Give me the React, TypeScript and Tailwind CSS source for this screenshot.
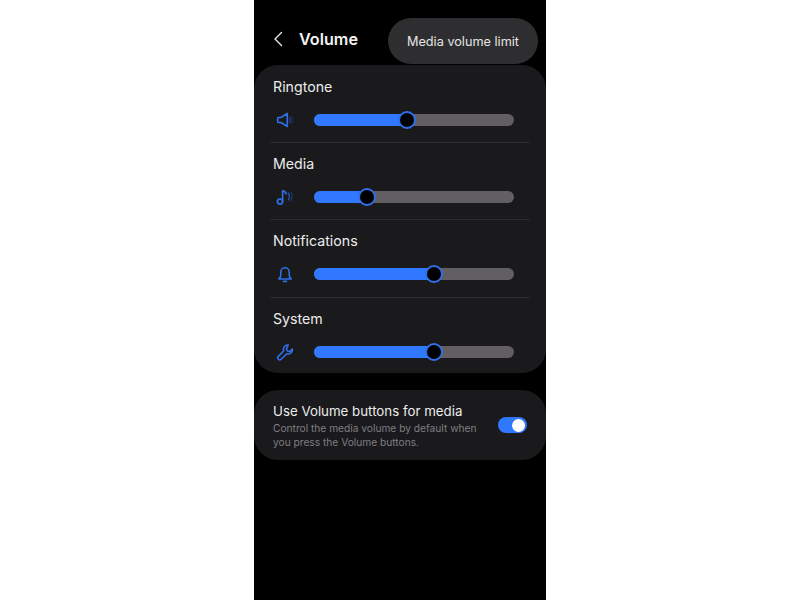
const sans = "font-['Inter','Noto_Sans',sans-serif]";

function SpeakerIcon() {
  return (
    <svg width="18" height="18" viewBox="0 0 18 18" fill="none" stroke="#2f6fe8" strokeWidth="1.6" strokeLinejoin="round" strokeLinecap="round">
      <path d="M1.7 6.5v5h3.2l6.4 4V2.5L4.9 6.5z" />
      <path d="M13.6 6.5c.8 1.6.8 3.4 0 5" stroke="#1f3f80" />
      <path d="M15.8 5.5c1 2.2 1 4.8 0 7" stroke="#1b2c52" />
    </svg>
  );
}

function MusicIcon() {
  return (
    <svg width="18" height="18" viewBox="0 0 18 18" fill="none" stroke="#2f6fe8" strokeWidth="1.7" strokeLinecap="round" strokeLinejoin="round">
      <circle cx="4" cy="13.6" r="2.6" />
      <path d="M6.6 13.4V2.8c1.8.2 3 1.2 3.6 3" />
      <path d="M12.4 5c1.1 2.2 1.1 5 0 7" stroke="#2a559f" strokeWidth="1.4" />
      <path d="M15 4c1.4 2.8 1.4 6.2 0 9" stroke="#1d3766" strokeWidth="1.4" />
    </svg>
  );
}

function BellIcon() {
  return (
    <svg width="18" height="18" viewBox="0 0 18 18" fill="none" stroke="#2f6fe8" strokeWidth="1.6" strokeLinecap="round" strokeLinejoin="round">
      <path d="M2.8 14c1.3-1 2-2.1 2-4V7a4.2 4.2 0 0 1 8.4 0v3c0 1.9.7 3 2 4z" />
      <path d="M7.5 16.4h3" />
    </svg>
  );
}

function WrenchIcon() {
  return (
    <svg width="18" height="18" viewBox="0 0 18 18" fill="none" stroke="#2f6fe8" strokeWidth="1.6" strokeLinecap="round" strokeLinejoin="round">
      <path d="M12.2 2a4.2 4.2 0 0 0-4.4 5.8l-5.5 5.6a2 2 0 0 0 2.9 2.9l5.6-5.6a4.2 4.2 0 0 0 5.6-4.6l-2.6 2.5-2.6-.7-.7-2.6z" />
    </svg>
  );
}

function VolumeRow({
  label,
  percent,
  icon,
  height,
  divider,
}: {
  label: string;
  percent: number;
  icon: React.ReactNode;
  height: string;
  divider?: boolean;
}) {
  return (
    <div className={`${height} mx-4 ${divider ? "border-b border-[#2c2b2f]" : ""}`}>
      <div className="h-[43px] pt-[10px] pl-[3px] text-[14.2px] leading-[22px] text-[#ececec]">{label}</div>
      <div className="flex items-center h-[22px]">
        <div className="w-11 shrink-0 pl-[6px]">{icon}</div>
        <div className="relative w-[200px] h-3 rounded-full bg-[#625f63]">
          <div className="h-3 rounded-full bg-[#2f78ff]" style={{ width: `${percent}%` }} />
          <div
            className="absolute top-[-3px] ml-[-9px] w-[18px] h-[18px] rounded-full bg-black border-2 border-[#2f6fe8]"
            style={{ left: `${percent}%` }}
          />
        </div>
      </div>
    </div>
  );
}

export default function App() {
  return (
    <div className={`min-h-[600px] bg-white ${sans}`}>
      <div className="relative w-[292px] h-[600px] mx-auto bg-black overflow-hidden">
        <header className="flex items-center h-[65px] pl-[18px] pt-[13px]">
          <svg width="12" height="18" viewBox="0 0 12 18" fill="none" stroke="#e8e8e8" strokeWidth="1.4" strokeLinecap="round" strokeLinejoin="round">
            <path d="M9.5 2.5 3 9l6.5 6.5" />
          </svg>
          <h1 className="ml-[15px] mt-[1px] text-[16.2px] font-semibold text-[#f2f2f2]">Volume</h1>
        </header>

        <div className="absolute left-[134px] top-[18px] w-[150px] h-[46px] pt-[1px] rounded-[23px] bg-[#2e2d30] flex items-center justify-center text-[12.7px] text-[#e4e4e4]">
          Media volume limit
        </div>

        <section className="h-[308px] pt-[1px] rounded-[24px] bg-[#1a191c]">
          <VolumeRow label="Ringtone" percent={46.5} icon={<SpeakerIcon />} height="h-[77px]" divider />
          <VolumeRow label="Media" percent={26.5} icon={<MusicIcon />} height="h-[77px]" divider />
          <VolumeRow label="Notifications" percent={60} icon={<BellIcon />} height="h-[78px]" divider />
          <VolumeRow label="System" percent={60} icon={<WrenchIcon />} height="h-[75px]" />
        </section>

        <section className="mt-[17px] h-[70px] rounded-[24px] bg-[#1a191c] flex items-start pt-3 px-[19px]">
          <div className="flex-1">
            <div className="text-[13.3px] leading-[18px] text-[#ececec]">Use Volume buttons for media</div>
            <div className="mt-[1px] text-[10.2px] leading-[14px] text-[#7f7e82]">
              Control the media volume by default when
              <br />
              you press the Volume buttons.
            </div>
          </div>
          <div className="mt-[15px] w-[29px] h-4 rounded-full bg-[#2f78ff] flex items-center justify-end pr-[2px] shrink-0">
            <div className="w-[13px] h-[13px] rounded-full bg-white" />
          </div>
        </section>
      </div>
    </div>
  );
}
